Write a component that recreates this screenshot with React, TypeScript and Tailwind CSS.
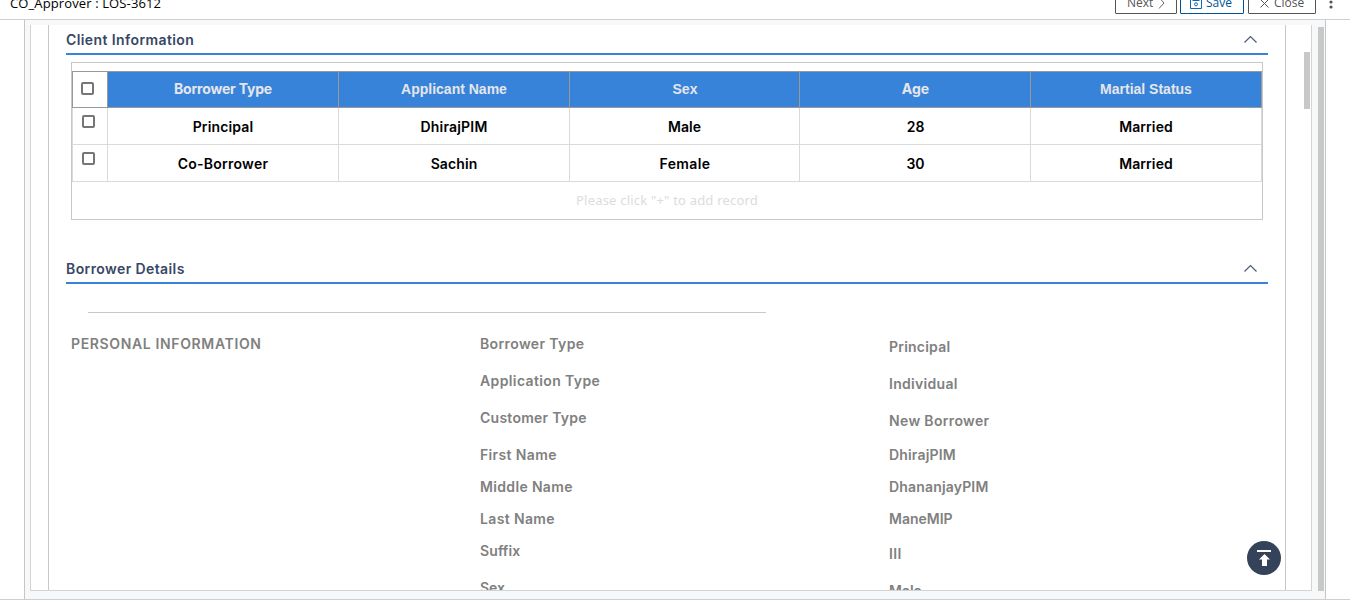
import React from 'react';

const text = "font-['Inter','Liberation_Sans',sans-serif] text-[14px] leading-[20px] font-semibold whitespace-nowrap";

function Chevron() {
  return (
    <svg width="14" height="9" viewBox="0 0 14 9" fill="none" stroke="#4a5a7d" strokeWidth="1.2">
      <path d="M1.5 7.5 L7.5 1.5 L13.5 7.5" />
    </svg>
  );
}

function SectionHeader({ title }: { title: string }) {
  return (
    <div className="flex h-[30px] items-center justify-between border-b-2 border-[#3883da] pr-[11px]">
      <h2 className={`${text} pt-[2px] tracking-[0.4px] text-[#374766]`}>{title}</h2>
      <Chevron />
    </div>
  );
}

function CheckBox() {
  return <span className="block h-[13px] w-[13px] rounded-[2px] border-2 border-[#767676] bg-white" />;
}

const grid = 'grid grid-cols-[35px_231px_231px_230px_231px_232px]';

const headers = [
  { label: 'Borrower Type', style: "font-['Inter',sans-serif] pb-[2px] tracking-[-0.2px]" },
  { label: 'Applicant Name', style: "font-['Liberation_Sans',sans-serif] pb-px" },
  { label: 'Sex', style: "font-['Liberation_Sans',sans-serif] pb-px pl-px" },
  { label: 'Age', style: "font-['Inter',sans-serif] pb-[2px] pl-px" },
  { label: 'Martial Status', style: "font-['Liberation_Sans',sans-serif] pb-px" },
];

const rows = [
  [
    { t: 'Principal', s: 'tracking-[0.15px]' },
    { t: 'DhirajPIM', s: 'tracking-[0.2px]' },
    { t: 'Male', s: 'tracking-normal' },
    { t: '28', s: 'pl-px' },
    { t: 'Married', s: 'tracking-[0.1px]' },
  ],
  [
    { t: 'Co-Borrower', s: 'tracking-[0.25px]' },
    { t: 'Sachin', s: 'tracking-[0.1px]' },
    { t: 'Female', s: 'tracking-[0.4px] pl-px' },
    { t: '30', s: 'pl-px' },
    { t: 'Married', s: 'tracking-[0.1px]' },
  ],
];

const labels = [
  { t: 'Borrower Type', h: 'h-[37px] tracking-[0.38px]' },
  { t: 'Application Type', h: 'h-[37px] tracking-[0.38px]' },
  { t: 'Customer Type', h: 'h-[37px] tracking-[0.26px]' },
  { t: 'First Name', h: 'h-[32px] tracking-[0.36px]' },
  { t: 'Middle Name', h: 'h-[32px] tracking-[0.34px]' },
  { t: 'Last Name', h: 'h-[32px] tracking-[0.36px]' },
  { t: 'Suffix', h: 'h-[37px] tracking-[0.1px]' },
  { t: 'Sex', h: 'h-[37px]' },
];

const values = [
  { t: 'Principal', h: 'h-[37px] tracking-[0.22px]' },
  { t: 'Individual', h: 'h-[37px] tracking-[0.3px]' },
  { t: 'New Borrower', h: 'h-[34px] tracking-[0.34px]' },
  { t: 'DhirajPIM', h: 'h-[32px] tracking-[0.17px]' },
  { t: 'DhananjayPIM', h: 'h-[32px] tracking-[0.17px]' },
  { t: 'ManeMIP', h: 'h-[35px]' },
  { t: 'III', h: 'h-[37px] tracking-[0.4px]' },
  { t: 'Male', h: 'h-[37px]' },
];

function TopBar() {
  const btn = 'flex h-[24px] items-center rounded-[1px] border bg-white pt-[2px] text-[12px] leading-[16px]';
  return (
    <header className="flex h-[20px] items-end justify-between border-b border-[#cfcfcf] font-['Open_Sans',sans-serif]">
      <div className="mb-[7px] pl-[10px] text-[13px] leading-[18px] tracking-[0.12px] text-black">CO_Approver : LOS-3612</div>
      <div className="mb-[5px] flex items-center">
        <button className={`${btn} w-[62px] border-[#555] pl-[11px] text-[#555]`}>
          Next
          <svg className="ml-[5px]" width="7" height="12" viewBox="0 0 7 12" fill="none" stroke="#666"><path d="M1 .5 L6 6 L1 11.5" /></svg>
        </button>
        <button className={`${btn} ml-[3px] w-[64px] border-[#005496] pl-[9px] text-[#005496]`}>
          <svg width="12" height="12" viewBox="0 0 12 12" fill="none" stroke="#0a6ab5"><path d="M.5 .5H11.5V11.5H.5Z M2.5 3.5H9.5" /><circle cx="6" cy="7.3" r="1.5" /></svg>
          <span className="ml-[4px]">Save</span>
        </button>
        <button className={`${btn} ml-[4px] w-[68px] border-[#555] pl-[11px] text-[#555]`}>
          <svg width="9" height="9" viewBox="0 0 9 9" stroke="#555"><path d="M.5 .5 L8.5 8.5 M8.5 .5 L.5 8.5" /></svg>
          <span className="ml-[5px]">Close</span>
        </button>
        <svg className="mr-[17px] ml-[13px]" width="4" height="14" viewBox="0 0 4 14" fill="#555"><circle cx="2" cy="2" r="1.6" /><circle cx="2" cy="7" r="1.6" /><circle cx="2" cy="12" r="1.6" /></svg>
      </div>
    </header>
  );
}

export default function App() {
  return (
    <div className="flex h-[615px] w-[1350px] flex-col overflow-hidden bg-white">
      <TopBar />
      <div className="flex h-[580px] border-b border-[#cfcfcf] pl-[24px]">
        <div className="flex w-[1302px] border-x border-[#c6c6c6] bg-[#f7f8fa] pt-[5px] pl-[5px]">
          <main className="flex h-[566px] w-[1282px] overflow-hidden border-x border-b border-[#d2d3d5] bg-white pl-[17px]">
            <div className="h-[700px] w-[1238px] shrink-0 border-x border-[#c8c8c8] px-[17px]">
              <SectionHeader title="Client Information" />
              <div className="mx-[5px] mt-[7px] h-[158px] w-[1192px] border border-[#c8c8c8] pt-[8px]">
                <div className={`${grid} h-[37px] w-[1190px] border-y border-[#999]`}>
                  <div className="flex items-center border-l border-[#999] pl-[8px] pb-[3px]"><CheckBox /></div>
                  {headers.map((h) => (
                    <div key={h.label} className={`flex items-center justify-center border-l border-[#999] bg-[#3883da] text-[14px] font-bold text-[#e4e6ea] last:border-r ${h.style}`}>{h.label}</div>
                  ))}
                </div>
                {rows.map((r) => (
                  <div key={r[0].t} className={`${grid} h-[37px] w-[1190px] border-b border-[#dadada]`}>
                    <div className="border-l border-[#dadada] pt-[7px] pl-[9px]"><CheckBox /></div>
                    {r.map((c, i) => (
                      <div key={i} className={`${text} flex items-center justify-center border-l border-[#dadada] pt-[2px] text-black last:border-r ${c.s}`}>{c.t}</div>
                    ))}
                  </div>
                ))}
                <p className="pt-[8px] text-center font-['Noto_Sans',sans-serif] text-[13px] leading-[20px] tracking-[0.2px] text-[#dcdcdc]">Please click "+" to add record</p>
              </div>
              <div className="mt-[34px]">
                <SectionHeader title="Borrower Details" />
              </div>
              <div className="mt-[28px] ml-[22px] h-px w-[678px] bg-[#c8c8c8]" />
              <div className="flex pl-[5px] text-[#808080]">
                <div className={`${text} w-[409px] pt-[21px] tracking-[0.64px]`}>PERSONAL INFORMATION</div>
                <div className="w-[409px] pt-[21px]">
                  {labels.map((l) => <div key={l.t} className={`${text} ${l.h}`}>{l.t}</div>)}
                </div>
                <div className="pt-[24px]">
                  {values.map((l) => <div key={l.t} className={`${text} ${l.h}`}>{l.t}</div>)}
                </div>
              </div>
            </div>
            <div className="mt-[27px] ml-[18px] h-[57px] w-[6px] shrink-0 bg-[#c8c8c8]" />
          </main>
          <div className="mt-[2px] ml-[6px] h-[564px] w-[6px] bg-[#c8c8c8]" />
        </div>
      </div>
      <button className="fixed top-[541px] left-[1247px] flex h-[34px] w-[34px] items-center justify-center rounded-full bg-[#34435a]">
        <svg width="34" height="34" viewBox="0 0 34 34" fill="#fff"><path d="M10 9H24V11H10Z M17.5 13L23 18.5H20V25H15V18.5H12Z" /></svg>
      </button>
    </div>
  );
}
